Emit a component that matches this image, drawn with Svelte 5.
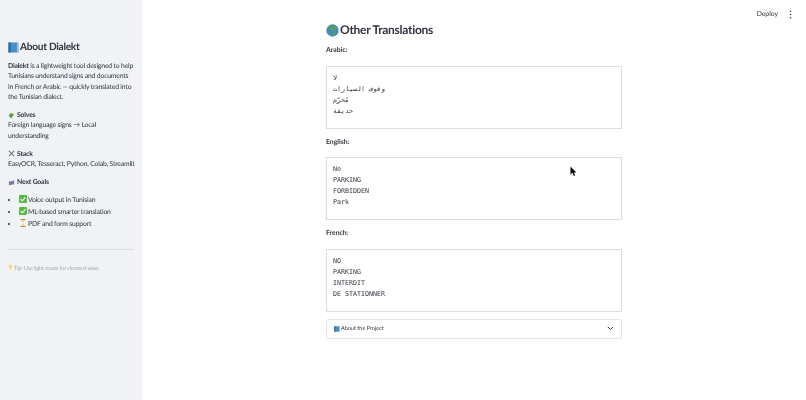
<script lang="ts">
  const goals = [
    { icon: 'check', text: 'Voice output in Tunisian' },
    { icon: 'check', text: 'ML-based smarter translation' },
    { icon: 'hourglass', text: 'PDF and form support' },
  ];

  const translations = [
    { label: 'Arabic:', lines: ['لا', 'وقوف السيارات', 'مُحرّم', 'حديقة'] },
    { label: 'English:', lines: ['No', 'PARKING', 'FORBIDDEN', 'Park'] },
    { label: 'French:', lines: ['NO', 'PARKING', 'INTERDIT', 'DE STATIONNER'] },
  ];
</script>

{#snippet book(size)}
  <svg class="emoji" width={size} height={size} viewBox="0 0 12 12">
    <rect x="0.5" y="0.5" width="11" height="11" rx="0.6" fill="#4a90c8" />
    <rect x="0.5" y="0.5" width="2.6" height="11" fill="#2f6ea6" />
    <rect x="10" y="1" width="1.5" height="10" fill="#a9cde8" />
  </svg>
{/snippet}

<div class="page">
  <aside class="sidebar">
    <h2>{@render book(11)}About Dialekt</h2>
    <p><strong>Dialekt</strong> is a lightweight tool designed to help Tunisians understand signs and documents<br />in French or Arabic — quickly translated into the Tunisian dialect.</p>

    <h5>
      <svg class="emoji" width="7" height="7" viewBox="0 0 8 8">
        <path d="M1 4l2-3 2 1 2 1-2 2-1 2-2-1z" fill="#5a9a4a" />
        <path d="M4 1l3 1-1 2z" fill="#c9a24a" />
      </svg>Solves
    </h5>
    <p>Foreign language signs → Local understanding</p>

    <h5>
      <svg class="emoji" width="7" height="7" viewBox="0 0 8 8">
        <path d="M1 1l6 6M7 1L1 7" stroke="#6b7480" stroke-width="1.2" />
      </svg>Stack
    </h5>
    <p>EasyOCR, Tesseract, Python, Colab, Streamlit</p>

    <h5>
      <svg class="emoji" width="7" height="7" viewBox="0 0 8 8">
        <path d="M1 7V3l3-1v1l3-2v5L1 7z" fill="#6f7f9c" />
        <path d="M1 7l1-2 1 1z" fill="#d9534f" />
      </svg>Next Goals
    </h5>
    <ul>
      {#each goals as goal}
        <li>
          {#if goal.icon === 'check'}
            <svg class="emoji" width="8" height="8" viewBox="0 0 8 8">
              <rect width="8" height="8" rx="1" fill="#58b947" />
              <path d="M1.700 4.200l1.600 1.600 3-3.400" fill="none" stroke="#fff" stroke-width="1.1" />
            </svg>
          {:else}
            <svg class="emoji" width="8" height="8" viewBox="0 0 8 8">
              <path d="M1.500.5h5M1.500 7.500h5" stroke="#b58a4a" />
              <path d="M2 1h4L4 4l2 3H2l2-3z" fill="#f0d890" />
            </svg>
          {/if}{goal.text}
        </li>
      {/each}
    </ul>

    <hr />
    <p class="tip">
      <svg class="emoji" width="5" height="7" viewBox="0 0 6 7">
        <path d="M3 0a2.400 2.400 0 0 1 1.300 4.400V6H1.700V4.400A2.400 2.400 0 0 1 3 0z" fill="#f4dc8c" />
      </svg>Tip: Use light mode for cleanest view.
    </p>
  </aside>

  <main class="main">
    <div class="topbar">
      <span>Deploy</span>
      <svg width="3" height="9" viewBox="0 0 3 9" fill="#31333f">
        <circle cx="1.5" cy="1.200" r="0.8" />
        <circle cx="1.5" cy="4.500" r="0.8" />
        <circle cx="1.5" cy="7.800" r="0.8" />
      </svg>
    </div>

    <div class="content">
      <h1>
        <svg class="globe" width="13" height="13" viewBox="0 0 14 14">
          <circle cx="7" cy="7" r="6.600" fill="#3f8fb5" />
          <path d="M4 2l5-.5 2.500 3L8 8 6 6 3 6z" fill="#5f9a62" />
          <path d="M7 9l3-.5-.5 3-2 1z" fill="#5f9a62" />
        </svg>Other Translations
      </h1>

      {#each translations as t}
        <h6>{t.label}</h6>
        <pre class="box">{t.lines.join('\n')}</pre>
      {/each}

      <div class="expander">
        <span class="exp-title">{@render book(6)}About the Project</span>
        <svg width="7" height="5" viewBox="0 0 7 5">
          <path d="M.8.9l2.700 2.700L6.200.9" fill="none" stroke="#31333f" stroke-width="1" />
        </svg>
      </div>
    </div>

    <svg class="cursor" width="8" height="11" viewBox="0 0 9 12">
      <path d="M.5.5v9l2.300-2 1.500 3.500 1.500-.6-1.500-3.400h3z" fill="#111" />
    </svg>
  </main>
</div>

<style>
  :global(body) {
    margin: 0;
  }

  .page {
    display: flex;
    width: 806px;
    height: 400px;
    overflow: hidden;
    font-family: Lato, 'Noto Sans', sans-serif;
    text-rendering: geometricPrecision;
    color: #31333f;
    background: #fff;
    filter: blur(0.3px);
  }

  .sidebar {
    box-sizing: border-box;
    width: 142px;
    flex: none;
    padding: 39px 6px 0 8px;
    background: #f0f2f6;
    font-size: 6.800px;
    letter-spacing: -0.16px;
    line-height: 10.600px;
  }

  h2 {
    display: flex;
    align-items: center;
    margin: 0 0 5.500px;
    font-size: 10.200px;
    letter-spacing: -0.3px;
    line-height: 16px;
    font-weight: 700;
  }

  .sidebar p {
    margin: 0 0 7px;
  }

  h5 {
    display: flex;
    align-items: center;
    gap: 1px;
    margin: 0;
    font-size: 6.800px;
    line-height: 10.600px;
    font-weight: 700;
  }

  .emoji {
    flex: none;
    margin-right: 1px;
    vertical-align: -1px;
  }

  ul {
    margin: 7.500px 0 0;
    padding: 0 0 0 11px;
  }

  li {
    margin-bottom: 1.400px;
  }

  hr {
    margin: 19.500px 2px 14px 0;
    border: none;
    border-top: 1px solid #dcdee3;
  }

  .sidebar .tip {
    font-size: 5.600px;
    color: #a5a7b0;
  }

  .main {
    position: relative;
    flex: 1;
    display: flex;
    justify-content: center;
  }

  .topbar {
    position: absolute;
    top: 9px;
    right: 14px;
    display: flex;
    align-items: center;
    gap: 11px;
    font-size: 6.800px;
    line-height: 11px;
  }

  .content {
    box-sizing: border-box;
    width: 296px;
    padding-top: 21px;
  }

  h1 {
    display: flex;
    align-items: center;
    gap: 1px;
    margin: 0 0 7.300px;
    font-size: 12px;
    letter-spacing: -0.28px;
    line-height: 18px;
    font-weight: 700;
  }

  h6 {
    margin: 0 0 10px;
    font-size: 6.800px;
    line-height: 9.400px;
    font-weight: 700;
  }

  .box {
    box-sizing: border-box;
    height: 63px;
    margin: 0 0 9px;
    padding: 6px 6px 5px;
    border: 1px solid #dcdde1;
    font-family: 'DejaVu Sans Mono', 'Noto Sans', monospace;
    font-size: 6.650px;
    line-height: 11px;
    color: #31333f;
  }

  .expander {
    box-sizing: border-box;
    display: flex;
    align-items: center;
    justify-content: space-between;
    height: 20px;
    margin-top: -1.800px;
    padding: 0 7px;
    border: 1px solid #e3e5e9;
    border-radius: 2px;
    font-size: 5.500px;
  }

  .exp-title {
    display: flex;
    align-items: center;
  }

  .cursor {
    position: absolute;
    left: 428px;
    top: 166px;
  }
</style>
